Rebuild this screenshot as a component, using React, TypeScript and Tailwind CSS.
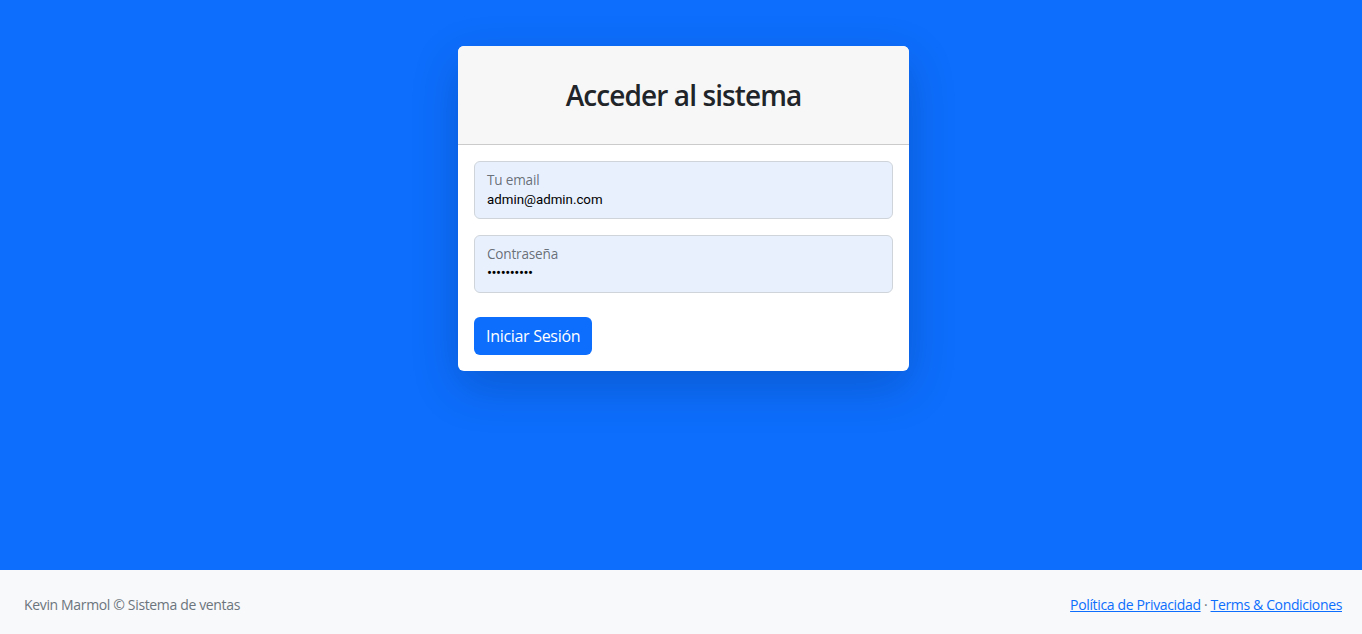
export default function App() {
  return (
    <div className="flex min-h-screen flex-col font-['Open_Sans',sans-serif]">
      <main className="flex-1 bg-[#0d6efd] pt-[46px]">
        <div className="ml-[calc(50%-223px)] w-[451px] overflow-hidden rounded-[6px] bg-white shadow-[0_1rem_3rem_rgba(0,0,0,0.175)]">
          {/* Header */}
          <div className="border-b border-black/[0.175] bg-[#f7f7f7] px-4 pt-[9px] pb-[7px]">
            <h3 className="my-6 text-center text-[28px] leading-[1.2] font-semibold tracking-[-0.9px] text-[#212529]">
              Acceder al sistema
            </h3>
          </div>
          {/* Body */}
          <div className="flex flex-col p-4">
            <div className="mb-4 h-[58px] rounded-[6px] border border-[#ced4da] bg-[#e8f0fe] px-3 pt-[8px]">
              <div className="text-[13.6px] leading-[20px] tracking-[-0.2px] text-[#212529]/65">Tu email</div>
              <div className="font-['Roboto',sans-serif] text-[13.3px] leading-[20px] text-black">admin@admin.com</div>
            </div>
            <div className="mb-6 h-[58px] rounded-[6px] border border-[#ced4da] bg-[#e8f0fe] px-3 pt-[8px]">
              <div className="text-[13.6px] leading-[20px] tracking-[-0.2px] text-[#212529]/65">Contraseña</div>
              <div className="font-['Roboto',sans-serif] text-[15px] leading-[18px] tracking-[-0.5px] text-black">••••••••••</div>
            </div>
            <div>
              <button className="h-[38px] rounded-[6px] bg-[#0d6efd] px-3 text-[16px] tracking-[-0.3px] text-white">
                Iniciar Sesión
              </button>
            </div>
          </div>
        </div>
      </main>
      <footer className="flex h-16 items-center justify-between bg-[#f8f9fa] pt-[4px] pr-5 pl-6 text-[14px] tracking-[-0.35px]">
        <div className="text-[#6c757d]">Kevin Marmol © Sistema de ventas</div>
        <div className="text-[#6c757d]">
          <a href="#" className="text-[#0d6efd] underline">Política de Privacidad</a>
          {" · "}
          <a href="#" className="text-[#0d6efd] underline">Terms &amp; Condiciones</a>
        </div>
      </footer>
    </div>
  );
}
